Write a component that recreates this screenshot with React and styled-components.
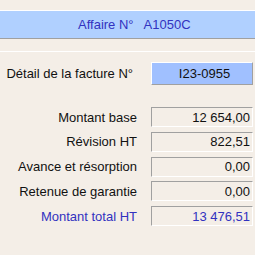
import React from "react";
import styled, { createGlobalStyle } from "styled-components";

const Global = createGlobalStyle`
  html, body { margin: 0; padding: 0; background: #f4eee7; }
  body { font-family: "Liberation Sans", Arial, sans-serif; font-size: 13px; color: #111; }
`;

const Page = styled.div`
  width: 255px;
  height: 255px;
  background: #f4eee7;
  padding-top: 10px;
  box-sizing: border-box;
  overflow: hidden;
`;

const Header = styled.div`
  height: 27px;
  background: #b0d0ff;
  border-top: 1px solid #ffffff;
  border-bottom: 1px solid #a0a0a0;
  display: flex;
  align-items: center;
  padding-left: 78px;
  gap: 10px;
  color: #3232c0;
`;

const Divider = styled.div`
  margin-top: 12px;
  height: 1px;
  background: #ffffff;
`;

const Form = styled.div`
  display: grid;
  grid-template-columns: 137px 102px;
  column-gap: 14px;
  padding-top: 10px;
`;

const Label = styled.div`
  text-align: right;
  align-self: center;
  white-space: nowrap;
  padding-right: ${(p) => (p.$inset ? 4 : 0)}px;
  margin-bottom: ${(p) => (p.$row ? 4.75 : 0)}px;
  color: ${(p) => (p.$accent ? "#3232c0" : "#111")};
`;

const RefBox = styled.div`
  height: 23px;
  box-sizing: border-box;
  background: #a0c0ff;
  border-top: 1px solid #ffffff;
  border-left: 1px solid #ffffff;
  border-bottom: 1px solid #a0a0a0;
  border-right: 1px solid #a0a0a0;
  display: flex;
  align-items: center;
  justify-content: center;
  padding-left: 5px;
  color: #111;
`;

const Spacer = styled.div`
  grid-column: 1 / span 2;
  height: ${(p) => p.$h}px;
`;

const ValueBox = styled.div`
  height: 20px;
  box-sizing: border-box;
  border-top: 1px solid #a0a0a0;
  border-left: 1px solid #a0a0a0;
  border-bottom: 1px solid #ffffff;
  border-right: 1px solid #ffffff;
  display: flex;
  align-items: center;
  justify-content: flex-end;
  padding-right: 2px;
  margin-bottom: 4.75px;
  color: ${(p) => (p.$accent ? "#3232c0" : "#111")};
`;

const rows = [
  ["Montant base", "12 654,00"],
  ["Révision HT", "822,51"],
  ["Avance et résorption", "0,00"],
  ["Retenue de garantie", "0,00"],
  ["Montant total HT", "13 476,51", true],
];

export default function App() {
  return (
    <Page>
      <Global />
      <Header>
        <span>Affaire N°</span>
        <span>A1050C</span>
      </Header>
      <Divider />
      <Form>
        <Label $inset>Détail de la facture N°</Label>
        <RefBox>I23-0955</RefBox>
        <Spacer $h={22} />
        {rows.map(([l, v, a]) => (
          <React.Fragment key={l}>
            <Label $row $accent={a}>{l}</Label>
            <ValueBox $accent={a}>{v}</ValueBox>
          </React.Fragment>
        ))}
      </Form>
    </Page>
  );
}
